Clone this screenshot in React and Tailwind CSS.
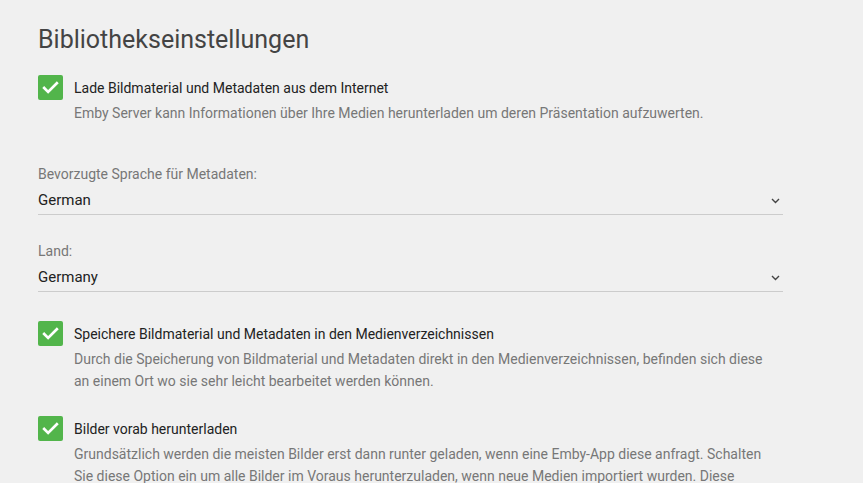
import React from 'react';

function Check() {
  return (
    <div className="w-[25px] h-[25px] rounded-[2px] bg-[#52b54b] flex items-center justify-center shrink-0">
      <svg width="19" height="19" viewBox="0 0 24 24" fill="none" stroke="#fff" strokeWidth="3.4" strokeLinecap="square">
        <path d="M4 12.5l5 5L20 6.5" />
      </svg>
    </div>
  );
}

function CheckOption({ label, children }) {
  return (
    <div>
      <div className="flex items-center gap-[11px]">
        <Check />
        <span className="text-[14px] leading-[20px] text-[#222]">{label}</span>
      </div>
      <p className="mt-[2px] ml-[36px] w-[689px] text-[14px] leading-[22px] text-[#777]">{children}</p>
    </div>
  );
}

function Select({ label, value }) {
  return (
    <div>
      <div className="text-[14px] leading-[20px] text-[#777]">{label}</div>
      <div className="mt-[1px] h-[30px] flex items-center justify-between border-b border-[#ccc] pt-[2px]">
        <span className="text-[15px] text-[#222]">{value}</span>
        <svg className="mr-[3px]" width="9" height="6" viewBox="0 0 9 6" fill="none" stroke="#444" strokeWidth="1.4">
          <path d="M1 1l3.5 3.5L8 1" />
        </svg>
      </div>
    </div>
  );
}

export default function App() {
  return (
    <div className="min-h-screen bg-[#f0f0f0] font-['Roboto',sans-serif] overflow-hidden">
      <div className="w-[745px] ml-[38px] pt-[24px]">
        <h1 className="text-[25px] leading-[32px] text-[#444]">Bibliothekseinstellungen</h1>
        <div className="mt-[19px]">
          <CheckOption label="Lade Bildmaterial und Metadaten aus dem Internet">
            Emby Server kann Informationen über Ihre Medien herunterladen um deren Präsentation aufzuwerten.
          </CheckOption>
        </div>
        <div className="mt-[40px]">
          <Select label="Bevorzugte Sprache für Metadaten:" value="German" />
        </div>
        <div className="mt-[26px]">
          <Select label="Land:" value="Germany" />
        </div>
        <div className="mt-[29px]">
          <CheckOption label="Speichere Bildmaterial und Metadaten in den Medienverzeichnissen">
            Durch die Speicherung von Bildmaterial und Metadaten direkt in den Medienverzeichnissen, befinden sich diese an einem Ort wo sie sehr leicht bearbeitet werden können.
          </CheckOption>
        </div>
        <div className="mt-[24px]">
          <CheckOption label="Bilder vorab herunterladen">
            Grundsätzlich werden die meisten Bilder erst dann runter geladen, wenn eine Emby-App diese anfragt. Schalten Sie diese Option ein um alle Bilder im Voraus herunterzuladen, wenn neue Medien importiert wurden. Diese kann zu deutlich längeren Bibliotheksscans führen.
          </CheckOption>
        </div>
      </div>
    </div>
  );
}
